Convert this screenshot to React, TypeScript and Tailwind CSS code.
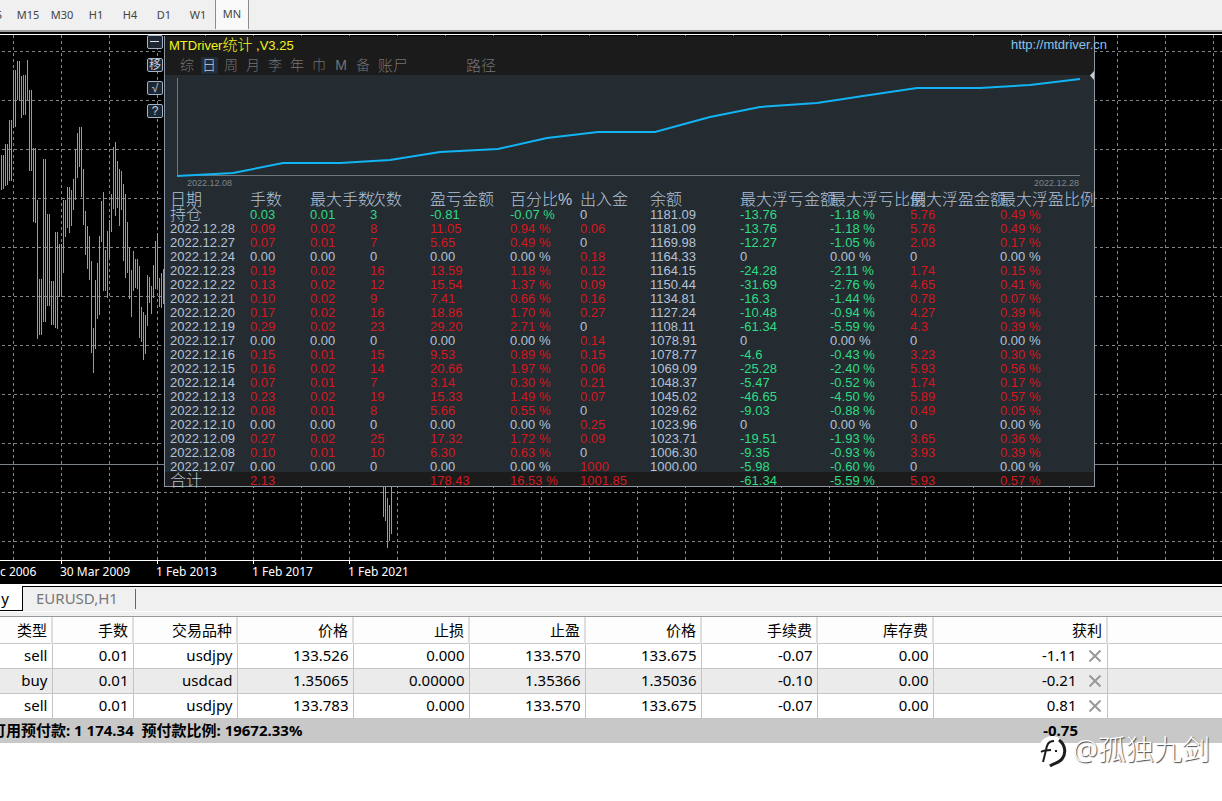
import clsx from "clsx";

const PERIODS = ["M5", "M15", "M30", "H1", "H4", "D1", "W1", "MN"];

// [top, bottom] of every monthly bar, one bar each 2px
const BARS: [number, number][] = [
  [155, 190], [155, 189], [144, 186], [144, 185], [120, 181], [120, 181], [70, 128], [70, 127],
  [61, 100], [61, 101], [76, 118], [75, 115], [75, 115], [60, 100], [90, 171], [90, 171],
  [148, 222], [148, 223], [200, 339], [279, 335], [279, 335], [159, 322], [159, 322], [214, 306],
  [214, 306], [281, 325], [281, 325], [232, 328], [232, 329], [244, 297], [244, 297], [200, 273],
  [200, 237], [187, 228], [187, 233], [190, 226], [179, 210], [149, 200], [133, 178], [127, 167],
  [127, 197], [169, 225], [211, 255], [226, 269], [236, 280], [261, 353], [328, 373], [280, 349],
  [263, 319], [236, 315], [201, 242], [192, 291], [250, 291], [231, 298], [220, 257], [194, 232],
  [147, 209], [142, 216], [161, 208], [169, 226], [171, 210], [184, 261], [194, 278], [222, 273],
  [248, 299], [270, 317], [251, 291], [259, 288], [259, 289], [266, 338], [307, 342], [312, 360],
  [315, 354], [275, 326], [277, 303], [286, 314], [265, 298], [241, 289], [233, 288], [278, 307],
  [273, 308], [269, 304],
];

const LATE_BARS: [number, number][] = [[480, 517], [480, 521], [498, 548], [505, 541], [480, 534]];

const CHART_TOP = 35;

const STAT_TABS = ["综", "日", "周", "月", "李", "年", "巾", "M", "备"];

const STAT_COLUMNS = [
  "日期", "手数", "最大手数", "次数", "盈亏金额", "百分比%",
  "出入金", "余额", "最大浮亏金额", "最大浮亏比例", "最大浮盈金额", "最大浮盈比例",
];

const STAT_ROWS = [
  ["持仓", "0.03", "0.01", "3", "-0.81", "-0.07 %", "0", "1181.09", "-13.76", "-1.18 %", "5.76", "0.49 %"],
  ["2022.12.28", "0.09", "0.02", "8", "11.05", "0.94 %", "0.06", "1181.09", "-13.76", "-1.18 %", "5.76", "0.49 %"],
  ["2022.12.27", "0.07", "0.01", "7", "5.65", "0.49 %", "0", "1169.98", "-12.27", "-1.05 %", "2.03", "0.17 %"],
  ["2022.12.24", "0.00", "0.00", "0", "0.00", "0.00 %", "0.18", "1164.33", "0", "0.00 %", "0", "0.00 %"],
  ["2022.12.23", "0.19", "0.02", "16", "13.59", "1.18 %", "0.12", "1164.15", "-24.28", "-2.11 %", "1.74", "0.15 %"],
  ["2022.12.22", "0.13", "0.02", "12", "15.54", "1.37 %", "0.09", "1150.44", "-31.69", "-2.76 %", "4.65", "0.41 %"],
  ["2022.12.21", "0.10", "0.02", "9", "7.41", "0.66 %", "0.16", "1134.81", "-16.3", "-1.44 %", "0.78", "0.07 %"],
  ["2022.12.20", "0.17", "0.02", "16", "18.86", "1.70 %", "0.27", "1127.24", "-10.48", "-0.94 %", "4.27", "0.39 %"],
  ["2022.12.19", "0.29", "0.02", "23", "29.20", "2.71 %", "0", "1108.11", "-61.34", "-5.59 %", "4.3", "0.39 %"],
  ["2022.12.17", "0.00", "0.00", "0", "0.00", "0.00 %", "0.14", "1078.91", "0", "0.00 %", "0", "0.00 %"],
  ["2022.12.16", "0.15", "0.01", "15", "9.53", "0.89 %", "0.15", "1078.77", "-4.6", "-0.43 %", "3.23", "0.30 %"],
  ["2022.12.15", "0.16", "0.02", "14", "20.66", "1.97 %", "0.06", "1069.09", "-25.28", "-2.40 %", "5.93", "0.56 %"],
  ["2022.12.14", "0.07", "0.01", "7", "3.14", "0.30 %", "0.21", "1048.37", "-5.47", "-0.52 %", "1.74", "0.17 %"],
  ["2022.12.13", "0.23", "0.02", "19", "15.33", "1.49 %", "0.07", "1045.02", "-46.65", "-4.50 %", "5.89", "0.57 %"],
  ["2022.12.12", "0.08", "0.01", "8", "5.66", "0.55 %", "0", "1029.62", "-9.03", "-0.88 %", "0.49", "0.05 %"],
  ["2022.12.10", "0.00", "0.00", "0", "0.00", "0.00 %", "0.25", "1023.96", "0", "0.00 %", "0", "0.00 %"],
  ["2022.12.09", "0.27", "0.02", "25", "17.32", "1.72 %", "0.09", "1023.71", "-19.51", "-1.93 %", "3.65", "0.36 %"],
  ["2022.12.08", "0.10", "0.01", "10", "6.30", "0.63 %", "0", "1006.30", "-9.35", "-0.93 %", "3.93", "0.39 %"],
  ["2022.12.07", "0.00", "0.00", "0", "0.00", "0.00 %", "1000", "1000.00", "-5.98", "-0.60 %", "0", "0.00 %"],
];

const STAT_TOTAL = ["合计", "2.13", "", "", "178.43", "16.53 %", "1001.85", "", "-61.34", "-5.59 %", "5.93", "0.57 %"];

const ORDER_COLUMNS = ["类型", "手数", "交易品种", "价格", "止损", "止盈", "价格", "手续费", "库存费"];

const ORDERS = [
  ["sell", "0.01", "usdjpy", "133.526", "0.000", "133.570", "133.675", "-0.07", "0.00", "-1.11"],
  ["buy", "0.01", "usdcad", "1.35065", "0.00000", "1.35366", "1.35036", "-0.10", "0.00", "-0.21"],
  ["sell", "0.01", "usdjpy", "133.783", "0.000", "133.570", "133.675", "-0.07", "0.00", "0.81"],
];

function tone(value: string) {
  if (value.startsWith("-")) return "text-[#2edc84]";
  if (parseFloat(value) === 0) return "text-[#b4c2d6]";
  return "text-[#d4181f]";
}

function cellTone(row: string[], index: number) {
  if (index === 0 || index === 7) return "text-[#b4c2d6]";
  // lots and count take the colour of the day's result
  if (index < 4) return tone(row[4]);
  return tone(row[index]);
}

function Toolbar() {
  return (
    <nav className="flex h-8 overflow-hidden border-b-2 border-[#9c9c9c] bg-[#f0f0f0] font-['Noto_Sans',sans-serif] text-[11px] text-[#444]">
      {PERIODS.map((period) => (
        <button
          key={period}
          type="button"
          className={clsx(
            "w-[34px] shrink-0 first:-ml-[23px]",
            period === "MN" && "h-[29px] border-x border-x-[#8c8c8c] bg-[#f9f9f9]",
            period !== "MN" && "h-[30px]"
          )}
        >
          {period}
        </button>
      ))}
    </nav>
  );
}

function Bars({ bars, start }: { bars: [number, number][]; start: number }) {
  return (
    <g className="fill-[#3fdc3f]">
      {bars.map(([top, bottom], i) => (
        <rect key={i} x={start + i * 2} y={top - CHART_TOP} width="1" height={bottom - top} />
      ))}
    </g>
  );
}

function PriceChart() {
  return (
    <svg className="absolute inset-0 h-full w-full" shapeRendering="crispEdges" aria-hidden>
      <g stroke="#7f868b" strokeDasharray="3 3">
        {Array.from({ length: 60 }, (_, i) => (
          <line key={i} x1={13.5 + i * 48} x2={13.5 + i * 48} y1="0" y2="100%" />
        ))}
        {Array.from({ length: 11 }, (_, i) => (
          <line key={i} x1="2" x2="100%" y1={16.5 + i * 49} y2={16.5 + i * 49} />
        ))}
      </g>
      <line x1="0" x2="100%" y1="429.5" y2="429.5" stroke="#7a8288" />
      <Bars bars={BARS} start={1} />
      <Bars bars={LATE_BARS} start={383} />
    </svg>
  );
}

function SideButtons() {
  const style =
    "flex h-[14px] w-4 items-center justify-center rounded-xs border border-[#a3b2c6] bg-[#1d2731] text-[12px] leading-none text-[#c4d0e0]";
  return (
    <div className="flex w-[164px] shrink-0 flex-col items-end gap-[9px] pr-[1px]">
      <button type="button" className={style} aria-label="收起">
        <svg width="10" height="8" shapeRendering="crispEdges"><path d="M0 3.5H9" stroke="#dfe6ee" /></svg>
      </button>
      <button type="button" className={style}>移</button>
      <button type="button" className={style}>√</button>
      <button type="button" className={style}>?</button>
    </div>
  );
}

function BalanceCurve() {
  return (
    <div className="h-[115px] pl-3 pr-3.5 pt-[2px]">
      <svg className="block h-[100px] w-full overflow-visible" viewBox="0 0 903 100" preserveAspectRatio="none">
        <path d="M0.5 1V98.5H903" fill="none" stroke="#70777d" shapeRendering="crispEdges" />
        <polyline
          points="0,99 56,96 106,86 163,86 213,83 263,75 321,72 370,61 421,55 478,55 533,40 583,30 640,26 686,19 740,11 803,11 853,8 903,2"
          fill="none"
          stroke="#12b4f4"
          strokeWidth="2"
        />
      </svg>
      <div className="flex justify-between pl-2.5 pr-[1px] text-[9px] leading-3 text-[#7e868c]">
        <span>2022.12.08</span>
        <span>2022.12.28</span>
      </div>
    </div>
  );
}

function StatTable() {
  return (
    <table className="w-full table-fixed border-collapse text-left text-[13px] leading-[10px] whitespace-nowrap">
      <colgroup>
        <col className="w-[85px]" />
        <col className="w-[60px]" />
        <col className="w-[60px]" />
        <col className="w-[60px]" />
        <col className="w-[80px]" />
        <col className="w-[70px]" />
        <col className="w-[70px]" />
        <col className="w-[90px]" />
        <col className="w-[90px]" />
        <col className="w-[80px]" />
        <col className="w-[90px]" />
        <col />
      </colgroup>
      <thead>
        <tr className="h-4 text-[#b4c2d6]">
          {STAT_COLUMNS.map((name) => (
            <th key={name} className="p-0 pt-1 text-[16px] leading-3 font-light first:pl-[5px]">{name}</th>
          ))}
        </tr>
      </thead>
      <tbody>
        {STAT_ROWS.map((row) => (
          <tr key={row[0]} className="h-[14px]">
            {row.map((value, i) => (
              <td
                key={i}
                className={clsx("p-0 pt-1 first:pl-[5px]", cellTone(row, i), value === "持仓" && "text-[16px] font-light")}
              >
                {value}
              </td>
            ))}
          </tr>
        ))}
      </tbody>
      <tfoot>
        <tr className="h-[14px] bg-[#1b1b1b]">
          {STAT_TOTAL.map((value, i) => (
            <td
              key={i}
              className={clsx("p-0 pt-1 first:pl-[5px]", cellTone(STAT_TOTAL, i), i === 0 && "text-[16px] font-light")}
            >
              {value}
            </td>
          ))}
        </tr>
      </tfoot>
    </table>
  );
}

function StatPanel() {
  return (
    <section className="relative mt-[1px] min-w-0 flex-1 border border-t-0 border-[#8b96a4] bg-[#242b31]">
      <header className="h-[39px] bg-[#1b1b1b]">
        <div className="flex h-[21px] justify-between pl-1 text-[13px] leading-[18px]">
          <h1 className="text-[#f4f41c]">
            MTDriver<span className="text-[15px] font-light">统计</span> ,V3.25
          </h1>
          <a href="http://mtdriver.cn" className="-mr-[13px] text-[#87c4ee]">http://mtdriver.cn</a>
        </div>
        <div className="flex pl-[11px] text-[14px] leading-[17px] font-light text-[#747474]">
          {STAT_TABS.map((tab) => (
            <button
              key={tab}
              type="button"
              className={clsx("flex w-[22px] justify-center", tab === "日" && "text-[#c0cbe0]")}
            >
              <span className={clsx("w-[17px]", tab === "日" && "bg-[#222d3a]")}>{tab}</span>
            </button>
          ))}
          <button type="button" className="ml-1 text-[15px]">账尸</button>
          <button type="button" className="ml-[58px] text-[15px]">路径</button>
        </div>
      </header>
      <svg className="absolute top-[35px] right-0" width="4" height="9" aria-hidden>
        <path d="M4 0V9L0 4.5Z" fill="#c8ccd0" />
      </svg>
      <BalanceCurve />
      <StatTable />
    </section>
  );
}

function TimeAxis() {
  const dates = ["30 Mar 2009", "1 Feb 2013", "1 Feb 2017", "1 Feb 2021"];
  return (
    <div className="flex h-6 border-t border-white font-['Noto_Sans',sans-serif] text-[12px] leading-[21px] whitespace-nowrap text-white">
      <span className="w-[60px] shrink-0">c 2006</span>
      {dates.map((date) => (
        <div key={date} className="w-24 shrink-0">
          <div className="ml-[1px] -mb-[3px] h-[3px] w-px bg-white" />
          {date}
        </div>
      ))}
    </div>
  );
}

function ChartTabs() {
  return (
    <div className="border-t-2 border-white bg-[#f0f0f0]">
      <div className="flex h-[25px] border-t border-black text-[15px]">
        <button type="button" className="-mt-[1px] w-[23px] border-r border-b border-black bg-white pr-3 text-black">y</button>
        <button type="button" className="pr-[17px] pb-[2px] pl-[13px] text-[#777]">EURUSD,H1</button>
        <span className="my-[2px] w-px bg-[#666]" />
      </div>
      <div className="h-[6px] border-t border-b border-t-white border-b-[#999]" />
    </div>
  );
}

function CloseIcon() {
  return (
    <svg width="12" height="12" viewBox="0 0 12 12" aria-hidden>
      <path d="M0.5 0.5L11.5 11.5M11.5 0.5L0.5 11.5" stroke="#999" strokeWidth="2" />
    </svg>
  );
}

function OrderTable() {
  return (
    <table className="w-full table-fixed border-collapse text-right text-[15px] leading-[22px] whitespace-nowrap text-black">
      <colgroup>
        <col className="w-[52px]" />
        <col className="w-[81px]" />
        <col className="w-[104px]" />
        <col className="w-[116px]" />
        <col className="w-[116px]" />
        <col className="w-[116px]" />
        <col className="w-[116px]" />
        <col className="w-[116px]" />
        <col className="w-[116px]" />
        <col className="w-[174px]" />
        <col />
      </colgroup>
      <thead>
        <tr className="h-[26px] border-b border-[#c8c8c8] bg-[#fdfdfd]">
          {ORDER_COLUMNS.map((name, i) => (
            <th key={i} className="border-r-2 border-r-[#dedede] p-0 pr-1 font-normal">{name}</th>
          ))}
          <th className="border-r-2 border-r-[#dedede] p-0 pr-1 font-normal">获利</th>
          <th className="p-0" />
        </tr>
      </thead>
      <tbody>
        {ORDERS.map((order, n) => (
          <tr key={n} className={clsx("h-[25px] border-b border-[#c4c4c4]", n % 2 === 1 && "bg-[#ebebeb]")}>
            {order.slice(0, 9).map((value, i) => (
              <td key={i} className="border-r border-r-[#c4c4c4] p-0 pr-1 pb-[2px]">{value}</td>
            ))}
            <td className="border-r border-r-[#c4c4c4] p-0 pr-[6px] pb-[2px]">
              <div className="flex items-center justify-end gap-3">
                {order[9]}
                <button type="button" className="pt-[3px]" aria-label="平仓">
                  <CloseIcon />
                </button>
              </div>
            </td>
            <td className="p-0" />
          </tr>
        ))}
      </tbody>
      <tfoot>
        <tr className="h-[25px] bg-[#c8c8c8] font-bold">
          <td colSpan={9} className="p-0 pb-[2px] text-left">
            <div className="-ml-[9px]">可用预付款: 1 174.34&nbsp; 预付款比例: 19672.33%</div>
          </td>
          <td className="p-0 pr-[29px] pb-[2px]">-0.75</td>
          <td className="p-0" />
        </tr>
      </tfoot>
    </table>
  );
}

function Signature() {
  return (
    <div className="absolute right-3 bottom-[30px] flex items-center gap-[2px] text-[28px] leading-10 font-light whitespace-nowrap text-white [text-shadow:1px_1px_1px_#444]">
      <svg className="mt-2" width="34" height="36" viewBox="0 0 34 36" aria-hidden>
        <circle cx="15" cy="14" r="13" fill="#fff" />
        <path d="M17 6C11 6 10 10 9 15L6 27" fill="none" stroke="#1c1c1c" strokeWidth="2" />
        <path d="M4 17C7 15 10 15 14 15M18 16H20" fill="none" stroke="#1c1c1c" strokeWidth="2" />
        <path d="M22 5C29 10 29 19 25 24C22 28 17 28 13 31" fill="none" stroke="#1c1c1c" strokeWidth="3" />
      </svg>
      @孤独九剑
    </div>
  );
}

export default function App() {
  return (
    <main className="flex min-h-screen flex-col overflow-hidden bg-white">
      <Toolbar />
      <div className="bg-black pt-[2px] font-['Liberation_Sans','Noto_Sans_CJK_SC',sans-serif]">
        <div className="relative flex border-t border-white pb-[73px]">
          <PriceChart />
          <div className="relative flex min-w-0 flex-1">
            <SideButtons />
            <StatPanel />
            <div className="w-[127px] shrink-0" />
          </div>
        </div>
        <TimeAxis />
      </div>
      <div className="relative flex-1 font-['Noto_Sans','Noto_Sans_CJK_SC',sans-serif]">
        <ChartTabs />
        <OrderTable />
        <Signature />
      </div>
    </main>
  );
}
